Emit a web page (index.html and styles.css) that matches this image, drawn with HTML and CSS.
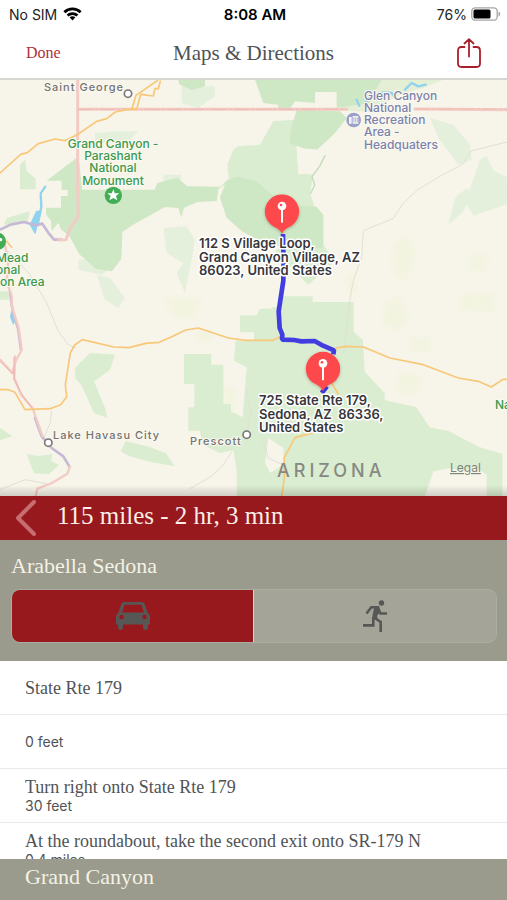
FILE: index.html
```html
<!DOCTYPE html>
<html lang="en">
<head>
<meta charset="utf-8">
<meta name="viewport" content="width=device-width, initial-scale=1">
<title>Maps &amp; Directions</title>
<link rel="stylesheet" href="styles.css">
</head>
<body>
<div class="app">
  <div class="status">
    <div class="status-left">
      <span>No SIM</span>
      <svg class="wifi" viewBox="0 0 20 15" aria-hidden="true">
        <g fill="none" stroke="#000" stroke-width="3"><path d="M1.3 5.6C6.2 .9 13.8 .9 18.7 5.6"/><path d="M4.7 9.2c3-2.9 7.600-2.900 10.600 0"/></g>
        <path d="M6.900 11.100c1.800-1.600 4.400-1.600 6.200 0L10 14.400z"/>
      </svg>
    </div>
    <span class="clock">8:08 AM</span>
    <div class="status-right">
      <span>76%</span>
      <svg class="battery" viewBox="0 0 30 14" aria-hidden="true">
        <rect x=".8" y=".8" width="25.400" height="12.400" rx="3.500" fill="#fff" stroke="#a5a5a5" stroke-width="1.300"/>
        <rect x="2.500" y="2.500" width="17" height="9" rx="1.500"/>
        <path d="M27.500 4.500c2.300.8 2.300 4.200 0 5z" fill="#a5a5a5"/>
      </svg>
    </div>
  </div>

  <header class="nav">
    <button class="done" type="button">Done</button>
    <h1>Maps &amp; Directions</h1>
    <button class="share" type="button" aria-label="Share">
      <svg viewBox="0 0 24 30" fill="none" stroke="#a8202b" stroke-width="1.800" stroke-linecap="round" stroke-linejoin="round" aria-hidden="true">
        <path d="M7.500 9H4.500Q1 9 1 12.500V25.500Q1 29 4.500 29H19.500Q23 29 23 25.500V12.500Q23 9 19.500 9H16.500M12 18.500V1.200M7.500 5.500 12 1.200l4.500 4.300"/>
      </svg>
    </button>
  </header>

  <main class="map">
    <svg viewBox="0 80 507 416" preserveAspectRatio="xMidYMid slice" role="img" aria-label="Route map of northern Arizona">
      <defs>
        <linearGradient id="edge" x1="0" y1="0" x2="0" y2="1"><stop offset="0" stop-color="#000" stop-opacity="0"/><stop offset="1" stop-color="#000" stop-opacity=".16"/></linearGradient>
        <filter id="shadow" x="-30%" y="-30%" width="160%" height="160%"><feDropShadow dx="0" dy="3" stdDeviation="4" flood-color="#000" flood-opacity=".25"/></filter>
        <filter id="soft"><feGaussianBlur stdDeviation="8"/></filter>
        <g id="pin">
          <path d="M0 66C-5 52-19 47-32 39A51.500 51.500 0 1 1 32 39C19 47 5 52 0 66Z" fill="#fd484c" filter="url(#shadow)"/>
          <path d="M-3-9H3V30L0 34-3 30Z" fill="#fff"/>
          <circle cy="-18" r="13" fill="#fff"/><circle cx="-3" cy="-21" r="4" fill="#fd484c"/>
        </g>
      </defs>
      <g transform="translate(0 78) scale(.333333)">
        <path fill="#f7f4e9" d="M-900-900H2500V2200H-900z"/>
        <g fill="#eff4da" opacity=".6" filter="url(#soft)">
          <path d="M485 660h120l-25 62h-50zM1180 500l40-30 30 60-40 80-30-20zM1150 690l40-40 40 60-30 50-50-20zM1410 530h50v50h-50zM1380 650h100v50h-100zM1200 880l70 20-30 50-50-10zM590 755h45v35h-45zM1230 780h60v40h-60zM668 920l40 20v50l-30 20zM1040 600l20-20 10 40-20 50z"/>
        </g>
        <g fill="#e5f0dc">
          <path d="M545 25h100v30l-50 35-50-15zM285 165l60-5 70 0-30 30-100 5zM1290 120l70 20 50 60 5 45-40 15-60-80zM1440 245l20-12 20 45 41 20v80l-100 35-25-40zM1365 360l35-30 15 15-25 55-45 42zM235 545l70-5 40 20-40 30-70-15zM290 590l40 10 45 60-20 30-40-25zM490 450l70-5 25 40-10 60-20 100-25-60 20-30-50-30zM490 290l55 0-5 30-50 10z"/>
        </g>
        <g fill="#daedd0">
          <path d="M225 870l45-45 75 5-15 45-48 35 35 85 5 25-40-15-38-85-18-18zM552 828h82v32h36v118h23v22l35 18 12-150-38-20 5-60h55v-25h-42v-51h50l10-20h35V688h25v-33h98v17h123v90l28 24 5 95 60 65v20l95 22 40 60 58 12 90 47 70 20v127H710v-77l-10-60-40 8-52-25-8-42h-35v-70h18v-70h-31zM362 1120l15-30 65 15 55 20 28 40-70-12-70-20zM80 1128l35 6 42-6-4 20 24 14-30 26-45-2zM0 1050l38 25-38 12zM0 640h26v25H0z"/>
          <path d="M60 260l15-15 5 35 27 22v32H60zM20 420l70-20-8 35-70 5z"/>
          <path d="M682 260l18-45 15-10 65-5 20-35 20-35 65-5 5 90 5 70 45 5-10 55 20 60-60 30-190-10zM965 410l5 90 35 50-80 70-100-100z"/>
        </g>
        <path fill="#e4efd5" d="M1140 5h190l-60 25-60 15-80 45-20 12-90-5 30-55z"/>
        <g fill="#cee7c4">
          <path d="M236 235l10 100h218l8-20 60-15 30 25 100 1 20-20 30-10 60 15 45 40 55 30 78 5 20 25 0 90-5 10-20 0-145-10-75-42-45-40-20-60 15-40-20 15-5 35-58 3-40 17-8 30-9-29-40-3-44 25-52 28-32 22-3 80-28 38-50-8-18-18-30-25-30-55-25-20-8-20-20 25-2-30-15-20v-20h45v-35h20v-18h-18v-28h-45z"/>
          <path d="M765 5h380l-20 35-15 10 0 25-100 15v-48h-60l-5 33-60-5-15 20h-35v-10l-45-5zM535 5h80v20l-40 12-38-18z"/>
          <path d="M890 95l130 5 20 20-35 45-55 52-30-2-52-20 4-35z"/>
        </g>
        <g fill="#f7f4e9">
          <path d="M945 43h62v42h-62zM892 210l70 5-10 20-25 50-32 5zM805 1080l45 30 0 50-40 25-15-30zM1300 1180l50-10 40 10 35-15 35 25v64h-185z"/>
          <path d="M1080 580l20-5 15 30-20 15z"/>
        </g>
        <g fill="none" stroke-linejoin="round" stroke-linecap="round">
          <path stroke="#e2dfd5" stroke-width="3" d="M1521 192l-108 27-25 40-72 38-65 40-42 40-30 45-89 36-5 80-25 70-10 55-9 82-10 80M25 520l65 70 50 85 35 85 30 40 22 10M155 1000l-5 35-20 50M738 930l15 70-12 70M695 1122l-30 45-35 30-60 35M0 1235l75-30 65 12M790 1090l15 50 48 22"/>
          <path stroke="#bfddb8" stroke-width="4" d="M975 233l-15 30-24 33 8 25-12 25"/>
          <g stroke="#8fd3ef" fill="#8fd3ef">
            <path stroke-width="7" fill="none" d="M136 326l-14 20 2 40-10 50"/>
            <path stroke-width="4" d="M110 400l13 0-10 35-8 30-14-25zM35 700l10 22-5 15-8-20z"/>
            <path fill="none" stroke-width="7" d="M1070 65l8 18M1100 70l15-20 12 15 20-22 28 2 15 20M1215 35l20-20 20 10 22-5"/>
          </g>
          <g stroke="#c5b9d6" stroke-width="8">
            <path d="M0 455l32-15 40-8 35 10 20-5 20 30 15 18 20 0"/>
            <path d="M30 640l5 40 5 25 15 50 8 60M105 1020l20 55 30 35 35 25 18 30"/>
          </g>
          <g stroke="#f3cbc5">
            <path stroke-width="9" d="M233 5v320l2 90-25 35-12 35-22 1M233 94H1040M1245 93l276 2"/>
            <path stroke-width="7" d="M15 500l10 50-5 60 15 45 0 30 20 60 10 70-18 35-10 35-37-40M45 835l-2 65 20 50 35 40 10 30 20 55M210 1165l-8 22-50 30-40 15-5 22"/>
          </g>
          <path stroke="#efb8b1" stroke-width="3" stroke-dasharray="45 7 8 7" stroke-linecap="butt" d="M233 94H1040M1245 93h276"/>
          <path stroke="#eea29f" stroke-width="2" d="M0 850l40 38M42 840v65l28 50 28 40"/>
          <g stroke="#f8c778" stroke-width="5">
            <path d="M0 285l62-56 20-5 33-27 50-14 30 5 40-20 55-38 30-8 26-20 50-10 12-40 65-45M372 94h38l12-45 38 5 5-22h10l6-22"/>
            <path d="M0 935h25l20 8 30 52 75-3 32-12 18-24-4-36 15-95 13-24 23-16 95 22 45 2 50-13 40-3 35-15 45-22 38-6 90 30 52 7h82l30-15M1002 822l8-12 25-5 55 2 80 33 100 20 105 40 60 10 39 17 35-23h12"/>
            <path d="M995 915l20 33M940 1064l-55 15-32 60v60l-8 55M20 490l15 18"/>
          </g>
          <path stroke="#413de0" stroke-width="14" stroke-linejoin="bevel" stroke-linecap="butt" d="M849 468l0 30 2 40-1 70-14 92 3 50 8 20-1 15 36 1 22 4 40-1 25 14 33 14-2 12M981 925l-16 20"/>
        </g>
        <circle cx="340" cy="352" r="26" fill="#42ad55"/>
        <path d="M340 334l4.500 12H358l-10 8 4 13-12-7-12 7 4-13-10-8h13.500z" fill="#fff"/>
        <circle cx="-8" cy="490" r="26" fill="#42ad55"/><circle cx="2" cy="485" r="5" fill="#fff"/>
        <circle cx="1061" cy="126" r="22" fill="#9aa0c7"/>
        <path d="M1047 117h8v20h-8zM1058 114h17v23h-17z" fill="#f2f2f7"/><path d="M1062 118v15M1067 118v15M1072 118v15" stroke="#9aa0c7" stroke-width="2"/>
        <g fill="#fff" stroke="#777" stroke-width="5"><circle cx="384" cy="47" r="11"/><circle cx="145" cy="1094" r="11"/><circle cx="740" cy="1070" r="11"/></g>
        <path fill="url(#edge)" d="M-900 1222H2500v32H-900z"/>
      </g>

      <g class="place city">
        <text x="44" y="91">Saint George</text>
        <text x="53" y="439">Lake Havasu City</text>
        <text x="190" y="445">Prescott</text>
      </g>
      <g class="place park">
        <g text-anchor="middle">
          <text x="113" y="148">Grand Canyon -</text><text x="113" y="160">Parashant</text><text x="113" y="172">National</text><text x="113" y="185">Monument</text>
        </g>
        <text x="-4" y="262">Mead</text><text x="-4" y="274">onal</text><text x="0" y="286">on Area</text><text x="495" y="409">Na</text>
      </g>
      <g class="place landmark">
        <text x="364" y="100">Glen Canyon</text><text x="364" y="112">National</text><text x="364" y="124">Recreation</text><text x="364" y="136">Area -</text><text x="364" y="149">Headquaters</text>
      </g>
      <text class="state" x="277" y="477">ARIZONA</text>
      <a href="#legal"><text class="legal" x="450" y="472">Legal</text></a>
      <g class="address">
        <text x="199" y="248">112 S Village Loop,</text><text x="199" y="262">Grand Canyon Village, AZ</text><text x="199" y="275">86023, United States</text>
        <text x="259" y="405">725 State Rte 179,</text><text x="259" y="419" xml:space="preserve">Sedona, AZ  86336,</text><text x="259" y="432">United States</text>
      </g>
      <g transform="translate(0 78) scale(.333333)">
        <use href="#pin" x="846" y="402"/>
        <use href="#pin" x="969" y="874"/>
      </g>
    </svg>
  </main>

  <section class="summary">
    <button class="back" type="button" aria-label="Back">
      <svg viewBox="0 0 20 36" fill="none" stroke="#c56d6f" stroke-width="4" stroke-linecap="round" stroke-linejoin="round" aria-hidden="true"><path d="M18 2 2 18 18 34"/></svg>
    </button>
    <h2>115 miles - 2 hr, 3 min</h2>
  </section>

  <section class="origin">
    <h2>Arabella Sedona</h2>
    <div class="modes">
      <button class="mode active" type="button" aria-label="Driving" aria-pressed="true">
        <svg class="car" viewBox="0 0 34 28" aria-hidden="true">
          <path fill="#575855" fill-rule="evenodd" d="M8.500 0H25.500Q28 0 28.800 2.300L31.500 10.500Q34 12 34 15V22.500H32V25Q32 28 29.500 28T27 25V22.500H7V25Q7 28 4.500 28T2 25V22.500H0V15Q0 12 2.500 10.500L5.200 2.300Q6 0 8.500 0ZM8.600 2.800 6 10.500H28L25.400 2.800Z"/>
          <circle cx="5.500" cy="15" r="2.200" fill="#97191d"/><circle cx="28.500" cy="15" r="2.200" fill="#97191d"/>
        </svg>
      </button>
      <button class="mode" type="button" aria-label="Walking" aria-pressed="false">
        <svg class="runner" viewBox="0 0 24 32" aria-hidden="true">
          <circle cx="18.500" cy="3" r="2.700" fill="#575855"/>
          <g fill="none" stroke="#575855" stroke-width="2.600" stroke-linejoin="miter">
            <path d="M3.500 13.500 8.300 7.200H14.500L17.500 13.500H24M0 25.400H10.300V17M11 17.500 17.700 22V32"/>
          </g>
          <path fill="#575855" d="M11.500 6h4.500l1.500 5-3.500 5 1 3.500-5.500-2v-2.500z"/>
        </svg>
      </button>
    </div>
  </section>

  <ol class="steps">
    <li><span class="step">State Rte 179</span></li>
    <li><span class="distance">0 feet</span></li>
    <li><span class="step">Turn right onto State Rte 179</span><span class="distance">30 feet</span></li>
    <li><span class="step">At the roundabout, take the second exit onto SR-179 N</span><span class="distance">0.4 miles</span></li>
  </ol>

  <footer class="destination"><h2>Grand Canyon</h2></footer>
</div>
</body>
</html>
```
FILE: styles.css
```css
* { box-sizing: border-box; }

body {
  margin: 0;
  background: #fff;
  color: #505356;
  font-family: Inter, "Liberation Sans", sans-serif;
}

h1, h2 {
  margin: 0;
  font-family: "Liberation Serif", serif;
  font-weight: 400;
}

button {
  padding: 0;
  border: 0;
  background: none;
  font: inherit;
  cursor: pointer;
}

svg { display: block; }

.app {
  display: flex;
  flex-direction: column;
  height: 100vh;
}

.status {
  display: grid;
  grid-template-columns: 1fr auto 1fr;
  align-items: center;
  flex: none;
  height: 28px;
  padding: 0 6px 0 9px;
  color: #222;
  font-size: 14px;
}

.status-left, .status-right {
  display: flex;
  align-items: center;
  gap: 6px;
}

.status-right { justify-content: flex-end; gap: 4px; }
.wifi { width: 19px; height: 14px; }
.battery { width: 30px; height: 14px; }
.clock { color: #000; font-size: 15px; font-weight: 600; }

.nav {
  display: grid;
  grid-template-columns: 1fr auto 1fr;
  align-items: center;
  flex: none;
  height: 52px;
  padding: 0 26px;
  border-bottom: 2px solid #d5d5d2;
}

.nav h1 { font-size: 21px; line-height: 24px; }

.done {
  justify-self: start;
  color: #b0303a;
  font-family: "Liberation Serif", serif;
  font-size: 16px;
  line-height: 24px;
}

.share { justify-self: end; }
.share svg { width: 24px; height: 30px; }

.map {
  flex: none;
  aspect-ratio: 507 / 416;
  overflow: hidden;
}

.map > svg { width: 100%; height: 100%; }

.place {
  stroke: #fbf9f1;
  stroke-width: 2px;
  paint-order: stroke;
  font-size: 12px;
  font-weight: 500;
}

.city {
  fill: #73736f;
  font-size: 11px;
  letter-spacing: 1px;
}

.park { fill: #3c9a4e; }
.landmark { fill: #7b83ac; }

.state {
  fill: #868983;
  font-size: 18px;
  font-weight: 500;
  letter-spacing: 4px;
}

.legal {
  fill: #7e857a;
  font-size: 12px;
  text-decoration: underline;
}

.address {
  fill: #36363a;
  stroke: #fff;
  stroke-width: 3px;
  stroke-linejoin: round;
  paint-order: stroke;
  font-size: 13px;
  font-weight: 600;
}

.summary {
  display: flex;
  align-items: center;
  flex: none;
  gap: 21px;
  height: 44px;
  padding: 0 16px;
  background: #97191d;
  color: #fbeee6;
}

.summary h2 {
  padding-bottom: 4px;
  font-size: 25px;
  line-height: 36px;
}

.back svg { width: 20px; height: 36px; }

.origin {
  flex: none;
  padding: 13px 10px 18px 11px;
  background: #9a9b8c;
  color: #f4f2e4;
}

.origin h2 { font-size: 22px; line-height: 26px; }

.modes {
  display: grid;
  grid-template-columns: 1fr 1fr;
  height: 54px;
  margin-top: 10px;
  border: 1px solid #acada1;
  border-radius: 9px;
  background: #a4a598;
  overflow: hidden;
}

.mode {
  display: flex;
  align-items: center;
  justify-content: center;
}

.active {
  border-right: 1px solid #e4d3cc;
  background: #97191d;
}

.car { width: 34px; height: 28px; }
.runner { width: 24px; height: 32px; }

.steps {
  flex: 1;
  min-height: 0;
  margin: 0;
  padding: 0;
  list-style: none;
  overflow: hidden;
}

.steps li {
  display: flex;
  flex-direction: column;
  justify-content: center;
  min-height: 54px;
  padding: 0 25px;
  border-bottom: 1px solid #e9e9e9;
}

.step {
  font-family: "Liberation Serif", serif;
  font-size: 18px;
  line-height: 20px;
}

.distance { font-size: 14px; line-height: 18px; }

.destination {
  flex: none;
  padding: 4px 25px 9px;
  background: #9a9b8c;
  color: #f4f2e4;
}

.destination h2 { font-size: 22px; line-height: 28px; }
```
